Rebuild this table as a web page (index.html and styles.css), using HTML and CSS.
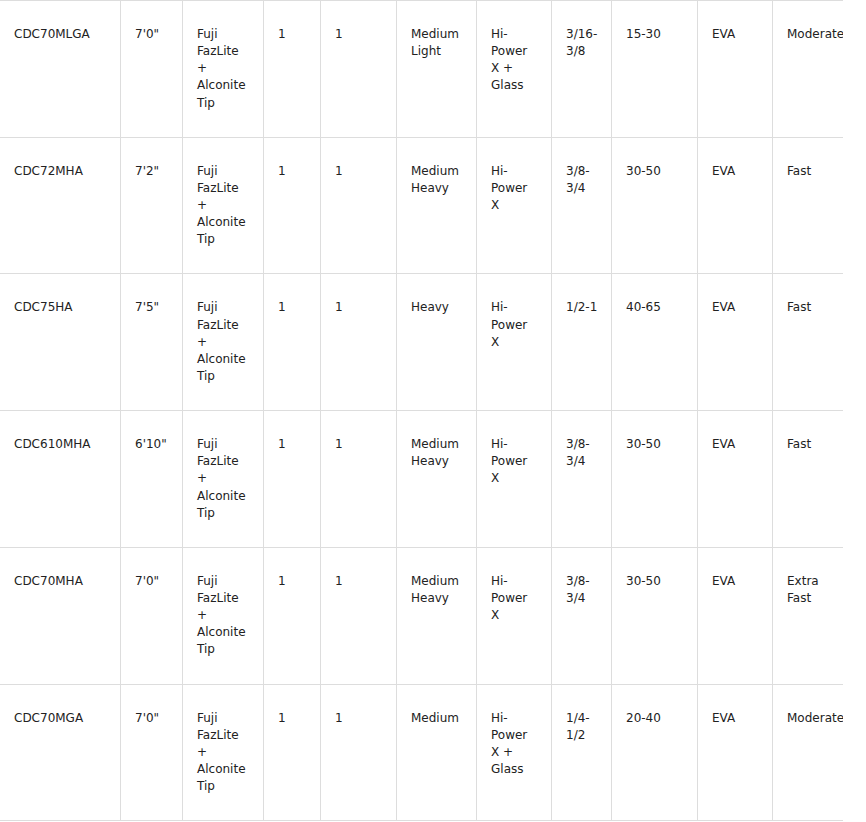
FILE: index.html
```html
<!DOCTYPE html>
<html lang="en">
<head>
<meta charset="utf-8">
<title>Rod specs</title>
<link rel="stylesheet" href="styles.css">
</head>
<body>
<div class="wrap">
<table class="specs">
<tbody>
<tr><td>CDC70MLGA</td><td>7'0"</td><td>Fuji FazLite + Alconite Tip</td><td>1</td><td>1</td><td>Medium Light</td><td>Hi-Power X + Glass</td><td>3/16-<wbr>3/8</td><td>15-30</td><td>EVA</td><td>Moderate</td></tr>
<tr><td>CDC72MHA</td><td>7'2"</td><td>Fuji FazLite + Alconite Tip</td><td>1</td><td>1</td><td>Medium Heavy</td><td>Hi-Power X</td><td>3/8-<wbr>3/4</td><td>30-50</td><td>EVA</td><td>Fast</td></tr>
<tr><td>CDC75HA</td><td>7'5"</td><td>Fuji FazLite + Alconite Tip</td><td>1</td><td>1</td><td>Heavy</td><td>Hi-Power X</td><td>1/2-<wbr>1</td><td>40-65</td><td>EVA</td><td>Fast</td></tr>
<tr><td>CDC610MHA</td><td>6'10"</td><td>Fuji FazLite + Alconite Tip</td><td>1</td><td>1</td><td>Medium Heavy</td><td>Hi-Power X</td><td>3/8-<wbr>3/4</td><td>30-50</td><td>EVA</td><td>Fast</td></tr>
<tr><td>CDC70MHA</td><td>7'0"</td><td>Fuji FazLite + Alconite Tip</td><td>1</td><td>1</td><td>Medium Heavy</td><td>Hi-Power X</td><td>3/8-<wbr>3/4</td><td>30-50</td><td>EVA</td><td>Extra Fast</td></tr>
<tr><td>CDC70MGA</td><td>7'0"</td><td>Fuji FazLite + Alconite Tip</td><td>1</td><td>1</td><td>Medium</td><td>Hi-Power X + Glass</td><td>1/4-<wbr>1/2</td><td>20-40</td><td>EVA</td><td>Moderate</td></tr>
</tbody>
</table>
</div>
</body>
</html>
```
FILE: styles.css
```css
html, body {
  margin: 0;
  padding: 0;
  background: #fff;
}
.wrap {
  width: 843px;
  overflow: hidden;
}
.specs {
  table-layout: fixed;
  width: 859px;
  border-collapse: separate;
  border-spacing: 0;
  border-top: 1px solid #dddddd;
  font-family: "DejaVu Sans", sans-serif;
  font-size: 12px;
  line-height: 1.4286;
  color: #222;
}
.specs td {
  box-sizing: border-box;
  vertical-align: top;
  padding: 25px 13px 25px 14px;
  border-right: 1px solid #dddddd;
  border-bottom: 1px solid #dddddd;
  overflow: visible;
}
.specs td:nth-child(1) { width: 121px; }
.specs td:nth-child(2) { width: 62px; }
.specs td:nth-child(3) { width: 81px; }
.specs td:nth-child(4) { width: 57px; }
.specs td:nth-child(5) { width: 76px; }
.specs td:nth-child(6) { width: 80px; }
.specs td:nth-child(7) { width: 75px; }
.specs td:nth-child(8) { width: 60px; }
.specs td:nth-child(9) { width: 86px; }
.specs td:nth-child(10) { width: 75px; }
.specs td:nth-child(11) { width: 86px; }
```
